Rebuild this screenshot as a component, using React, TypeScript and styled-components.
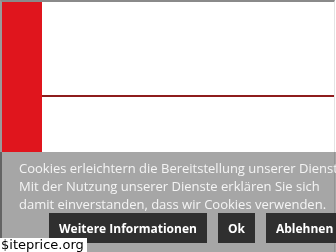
import React from 'react';
import styled, { createGlobalStyle } from 'styled-components';

const GlobalStyle = createGlobalStyle`
  html, body {
    margin: 0;
    padding: 0;
    background: #ffffff;
    overflow: hidden;
  }
  body {
    width: 336px;
    height: 252px;
    font-family: "Open Sans", "DejaVu Sans", sans-serif;
  }
`;

const Frame = styled.div`
  width: 332px;
  height: 250px;
  border-top: 2px solid #8a8a8a;
  border-left: 2px solid #9a9a9a;
  border-right: 1px solid #e4e4e4;
  display: flex;
`;

const SideBar = styled.div`
  width: 40px;
  height: 150px;
  background: #e0151d;
  flex-shrink: 0;
`;

const Main = styled.div`
  flex: 1;
  display: flex;
  flex-direction: column;
  padding-top: 93px;
`;

const Rule = styled.div`
  height: 2px;
  background: #8e1c1c;
`;

const Banner = styled.div`
  position: fixed;
  left: 0;
  bottom: 0;
  width: 336px;
  height: 100px;
  box-sizing: border-box;
  background: rgba(0, 0, 0, 0.35);
  padding: 7px 0 0 19px;
  overflow: hidden;
`;

const Line = styled.div`
  color: #f4f4f4;
  font-size: 13px;
  line-height: 18px;
  white-space: nowrap;
`;

const Buttons = styled.div`
  display: flex;
  gap: 11px;
  margin: 0 0 0 30px;
`;

const Button = styled.button`
  height: 30px;
  padding: 0 10px;
  border: none;
  background: #2f2f2f;
  color: #ffffff;
  font-family: "Open Sans", "DejaVu Sans", sans-serif;
  font-weight: 700;
  font-size: 12px;
  white-space: nowrap;
  flex-shrink: 0;
  cursor: pointer;
`;

const Watermark = styled.div`
  position: fixed;
  left: 0;
  bottom: 0;
  background: #ffffff;
  color: #000000;
  font-family: "DejaVu Sans", sans-serif;
  font-size: 13px;
  line-height: 14px;
  padding: 0 3px 0 1px;
`;

export default function App() {
  return (
    <>
      <GlobalStyle />
      <Frame>
        <SideBar />
        <Main>
          <Rule />
        </Main>
      </Frame>
      <Banner>
        <Line>Cookies erleichtern die Bereitstellung unserer Dienste.</Line>
        <Line>Mit der Nutzung unserer Dienste erklären Sie sich</Line>
        <Line>damit einverstanden, dass wir Cookies verwenden.</Line>
        <Buttons>
          <Button>Weitere Informationen</Button>
          <Button>Ok</Button>
          <Button>Ablehnen</Button>
        </Buttons>
      </Banner>
      <Watermark>$iteprice.org</Watermark>
    </>
  );
}
